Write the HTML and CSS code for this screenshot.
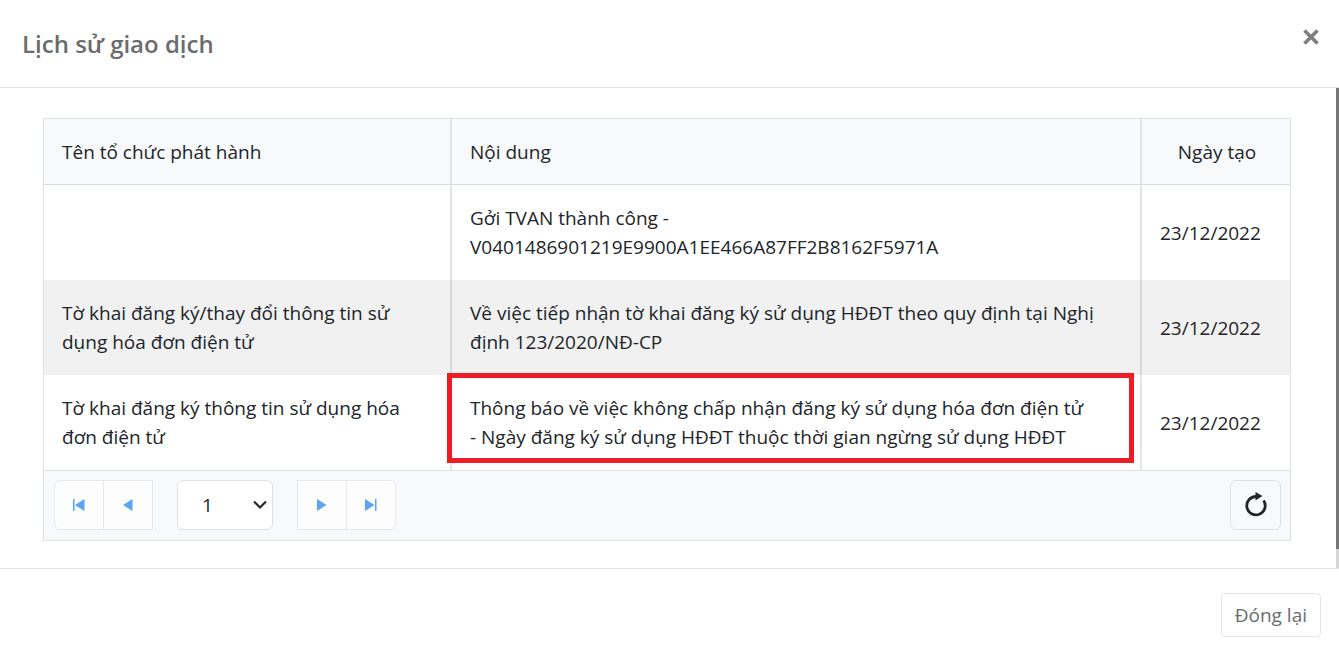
FILE: index.html
```html
<!DOCTYPE html>
<html lang="vi">
<head>
<meta charset="utf-8">
<meta name="viewport" content="width=device-width, initial-scale=1">
<title>Lịch sử giao dịch</title>
<link rel="stylesheet" href="styles.css">
</head>
<body>
<section class="modal" role="dialog" aria-labelledby="modal-title">
  <header class="modal-header">
    <h1 class="modal-title" id="modal-title">Lịch sử giao dịch</h1>
    <button class="close" type="button" aria-label="Đóng">
      <svg width="16" height="16" viewBox="0 0 16 16"><path d="M1.500 1.500 14.500 14.500M14.500 1.500 1.500 14.500" stroke="#808080" stroke-width="3.800"/></svg>
    </button>
  </header>
  <div class="modal-body">
    <div class="modal-content">
      <div class="grid">
        <table class="grid-table">
          <colgroup><col class="col-org"><col class="col-content"><col class="col-date"></colgroup>
          <thead>
            <tr><th>Tên tổ chức phát hành</th><th>Nội dung</th><th class="date-head">Ngày tạo</th></tr>
          </thead>
          <tbody>
            <tr>
              <td></td>
              <td>Gởi TVAN thành công -<br>V0401486901219E9900A1EE466A87FF2B8162F5971A</td>
              <td>23/12/2022</td>
            </tr>
            <tr>
              <td>Tờ khai đăng ký/thay đổi thông tin sử dụng hóa đơn điện tử</td>
              <td>Về việc tiếp nhận tờ khai đăng ký sử dụng HĐĐT theo quy định tại Nghị định 123/2020/NĐ-CP</td>
              <td>23/12/2022</td>
            </tr>
            <tr>
              <td>Tờ khai đăng ký thông tin sử dụng hóa đơn điện tử</td>
              <td class="marked">Thông báo về việc không chấp nhận đăng ký sử dụng hóa đơn điện tử<br>- Ngày đăng ký sử dụng HĐĐT thuộc thời gian ngừng sử dụng HĐĐT</td>
              <td>23/12/2022</td>
            </tr>
          </tbody>
        </table>
        <nav class="pager" aria-label="Phân trang">
          <div class="pager-group">
            <button class="pager-btn first" type="button" aria-label="Trang đầu">
              <svg width="12" height="12" viewBox="0 0 12 12"><path d="M0 0h1.500v12H0zM11.500 0v12L2 6z" fill="#5ba3f5"/></svg>
            </button>
            <button class="pager-btn" type="button" aria-label="Trang trước">
              <svg width="12" height="12" viewBox="0 0 12 12"><path d="M10.500 0v12L1 6z" fill="#5ba3f5"/></svg>
            </button>
          </div>
          <div class="page-select">
            <select aria-label="Trang"><option>1</option></select>
            <svg class="chevron" width="14" height="10" viewBox="0 0 14 10"><path d="M1 1.500 7 7.500 13 1.500" fill="none" stroke="#212529" stroke-width="2.200"/></svg>
          </div>
          <div class="pager-group">
            <button class="pager-btn" type="button" aria-label="Trang sau">
              <svg width="12" height="12" viewBox="0 0 12 12"><path d="M1 0v12L10.500 6z" fill="#5ba3f5"/></svg>
            </button>
            <button class="pager-btn last" type="button" aria-label="Trang cuối">
              <svg width="12" height="12" viewBox="0 0 12 12"><path d="M10 0h1.500v12H10zM0 0v12L9.500 6z" fill="#5ba3f5"/></svg>
            </button>
          </div>
          <button class="refresh" type="button" aria-label="Tải lại">
            <svg width="24" height="26" viewBox="0 0 24 26"><path d="M12.500 4.500A9.200 9.200 0 1 0 19.600 8.500" fill="none" stroke="#212529" stroke-width="2.800"/><path d="M11.500 0v8.500L18.500 4z" fill="#212529"/></svg>
          </button>
        </nav>
      </div>
    </div>
    <div class="scroll-track"><div class="scroll-thumb"></div></div>
  </div>
  <footer class="modal-footer">
    <button class="dismiss" type="button">Đóng lại</button>
  </footer>
</section>
</body>
</html>
```

FILE: styles.css
```css
* {
  box-sizing: border-box;
}

body {
  margin: 0;
  background: #fff;
  color: #212529;
  font: 19px/29px "Open Sans", "Noto Sans", sans-serif;
}

button,
select {
  margin: 0;
  padding: 0;
  font: inherit;
  color: inherit;
}

button {
  display: flex;
  align-items: center;
  justify-content: center;
}

.modal-header {
  display: flex;
  align-items: flex-start;
  justify-content: space-between;
  padding: 29px 20px 28px 22px;
  border-bottom: 1px solid #dee2e6;
}

.modal-title {
  margin: 0;
  font-size: 24px;
  line-height: 30px;
  font-weight: 600;
  color: #6a6c6f;
}

.close {
  border: 0;
  background: none;
}

.modal-body {
  display: flex;
}

.modal-content {
  flex: 1;
  min-width: 0;
  padding: 30px 45px 27px 43px;
}

.grid {
  border: 1px solid #dfe2e5;
}

.grid-table {
  width: 100%;
  table-layout: fixed;
  border-collapse: separate;
  border-spacing: 0;
}

.col-org {
  width: 408px;
}

.col-date {
  width: 148px;
}

th,
td {
  padding: 19px 16px 18px 18px;
  text-align: left;
  font-weight: 400;
  border-right: 2px solid #e2e4e6;
}

th:last-child,
td:last-child {
  border-right: 0;
}

th {
  padding-bottom: 17px;
  background: #f8f9fb;
  border-bottom: 1px solid #d8dbde;
}

th.date-head {
  text-align: center;
}

tbody tr:nth-child(even) {
  background: #f1f1f1;
}

tbody tr:nth-child(even) td {
  border-color: #d6d8da;
}

.marked {
  position: relative;
}

.marked::after {
  content: "";
  position: absolute;
  inset: -2px 6px 7px -5px;
  border: 5px solid #ee1c24;
}

.pager {
  display: flex;
  align-items: center;
  gap: 24px;
  padding: 9px 9px 10px 10px;
  border-top: 1px solid #dee2e6;
  background: #f8f9fb;
}

.pager-group {
  display: flex;
}

.pager-btn {
  width: 50px;
  height: 50px;
  border: 1px solid #e8e9eb;
  background: #fdfdfd;
}

.pager-btn + .pager-btn {
  margin-left: -1px;
}

.first {
  border-radius: 6px 0 0 6px;
}

.last {
  border-radius: 0 6px 6px 0;
}

.page-select {
  position: relative;
}

.page-select select {
  width: 96px;
  height: 50px;
  padding-left: 24px;
  border: 1px solid #dee2e6;
  border-radius: 6px;
  background: #fff;
  appearance: none;
}

.chevron {
  position: absolute;
  right: 6px;
  top: 20px;
  pointer-events: none;
}

.refresh {
  width: 51px;
  height: 50px;
  margin-left: auto;
  border: 1px solid #dee2e6;
  border-radius: 6px;
  background: #f8f9fb;
}

.scroll-track {
  width: 3px;
  background: #d6d6d6;
}

.scroll-thumb {
  height: 96%;
  background: #757575;
}

.modal-footer {
  display: flex;
  justify-content: flex-end;
  padding: 24px 18px;
  border-top: 1px solid #dee2e6;
}

.dismiss {
  height: 44px;
  padding: 0 13px;
  border: 1px solid #e4e7ea;
  border-radius: 4px;
  background: #fff;
  color: #6a6c6f;
}
```
